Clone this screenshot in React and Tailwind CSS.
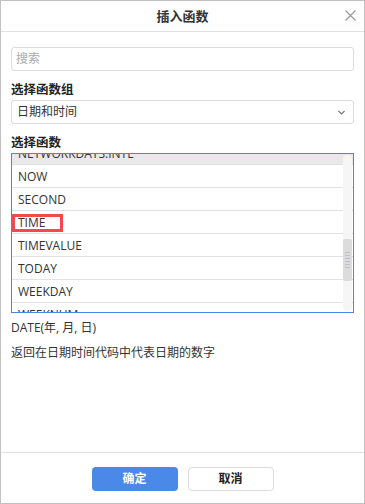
const rows = [
  "NETWORKDAYS.INTL",
  "NOW",
  "SECOND",
  "TIME",
  "TIMEVALUE",
  "TODAY",
  "WEEKDAY",
  "WEEKNUM",
];

const font = { fontFamily: '"Segoe UI", "Open Sans", "Noto Sans CJK SC", sans-serif' };

export default function App() {
  return (
    <div
      className="w-[365px] h-[504px] bg-white border border-[#c2c2c2] flex flex-col text-[#333]"
      style={font}
    >
      {/* 标题栏 */}
      <div className="relative h-[31px] shrink-0 border-b border-[#e1e1e1] flex items-center justify-center">
        <span className="text-[13px] font-bold text-[#333] leading-none">插入函数</span>
        <svg
          className="absolute right-[8px] top-[9px]"
          width="11"
          height="11"
          viewBox="0 0 11 11"
          fill="none"
          stroke="#9a9a9a"
          strokeWidth="1.2"
        >
          <path d="M0.5 0.5L10.5 10.5M10.5 0.5L0.5 10.5" />
        </svg>
      </div>

      <div className="flex-1 px-[10px] flex flex-col">
        <div className="mt-[15px] h-[24px] border border-[#dcdcdc] rounded-[3px] flex items-center px-[4px]">
          <span className="text-[12px] text-[#aaa] leading-none">搜索</span>
        </div>

        <div className="mt-[9px] h-[20px] leading-[20px] text-[12.5px] font-semibold text-[#222]">选择函数组</div>
        <div className="h-[24px] border border-[#dcdcdc] rounded-[3px] flex items-center justify-between pl-[5px] pr-[8px]">
          <span className="text-[12px] text-[#333] leading-none">日期和时间</span>
          <svg width="7" height="5" viewBox="0 0 7 5" fill="none" stroke="#777" strokeWidth="1.2">
            <path d="M0.5 1L3.5 4L6.5 1" />
          </svg>
        </div>

        <div className="mt-[9px] h-[20px] leading-[20px] text-[12.5px] font-semibold text-[#222]">选择函数</div>
        <div className="relative h-[160px] border border-[#4a86e8] overflow-hidden">
          <div className="-mt-[12px]">
            {rows.map((r, i) => (
              <div
                key={r}
                className={
                  "h-[23px] border-b border-[#e2e2e2] pl-[6px] pt-[2px] flex items-center text-[12px] text-[#333] " +
                  (i === 0 ? "bg-[#e9e9e9]" : "")
                }
              >
                {r}
              </div>
            ))}
          </div>
          {/* 滚动条 */}
          <div className="absolute right-[1px] top-[1px] bottom-[1px] w-[9px] rounded-[4px] bg-[#f6f6f6]">
            <div className="absolute left-0 right-0 top-[84px] h-[42px] rounded-[2px] bg-[#dcdcdc] flex flex-col items-center justify-center gap-[2px]">
              {[0, 1, 2, 3, 4, 5].map((k) => (
                <div key={k} className="w-[5px] h-px bg-[#bdbdd0]" />
              ))}
            </div>
          </div>
          {/* 标注框 */}
          <div className="absolute left-0 top-[60px] w-[51px] h-[18px] border-[3px] border-[#f04b4b]" />
        </div>

        <div className="mt-[5px] h-[20px] leading-[20px] text-[12px] text-[#333]">DATE(年, 月, 日)</div>
        <div className="mt-[5px] h-[20px] leading-[20px] text-[12px] text-[#333]">返回在日期时间代码中代表日期的数字</div>
      </div>

      <div className="h-[51px] shrink-0 border-t border-[#e1e1e1] pt-[14px] flex justify-center gap-[10px]">
        <button className="w-[86px] h-[24px] rounded-[4px] bg-[#4a89e8] text-white text-[12px] font-bold leading-none">
          确定
        </button>
        <button className="w-[86px] h-[24px] rounded-[4px] border border-[#dcdcdc] bg-white text-[#222] text-[12px] font-bold leading-none">
          取消
        </button>
      </div>
    </div>
  );
}
